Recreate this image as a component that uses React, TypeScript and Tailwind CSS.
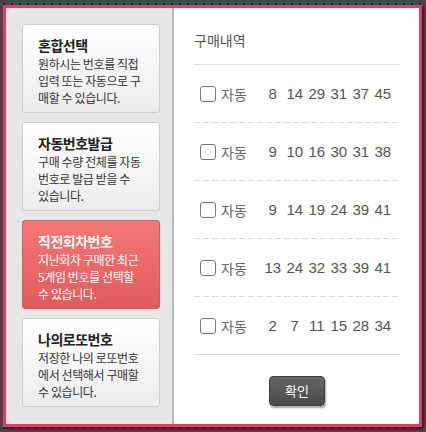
import React from 'react';

const cards = [
  { title: '혼합선택', lines: ['원하시는 번호를 직접', '입력 또는 자동으로 구', '매할 수 있습니다.'], active: false },
  { title: '자동번호발급', lines: ['구매 수량 전체를 자동', '번호로 발급 받을 수', '있습니다.'], active: false },
  { title: '직전회차번호', lines: ['지난회차 구매한 최근', '5게임 번호를 선택할', '수 있습니다.'], active: true },
  { title: '나의로또번호', lines: ['저장한 나의 로또번호', '에서 선택해서 구매할', '수 있습니다.'], active: false },
];

const rows = [
  [8, 14, 29, 31, 37, 45],
  [9, 10, 16, 30, 31, 38],
  [9, 14, 19, 24, 39, 41],
  [13, 24, 32, 33, 39, 41],
  [2, 7, 11, 15, 28, 34],
];

const kr = { fontFamily: '"Noto Sans CJK KR", "Noto Sans", sans-serif' };

export default function App() {
  return (
    <div
      className="w-[426px] h-[432px] pt-[5px] pl-[3px] bg-[#474747] bg-[radial-gradient(#262626_1px,transparent_1.2px)] bg-[length:8px_8px]"
      style={kr}
    >
      <div className="w-[419px] h-[422px] border-[3px] border-[#f5336f] flex shadow-[2px_2px_2px_rgba(0,0,0,0.5)]">
        {/* left menu */}
        <div className="w-[168px] h-full bg-[#e6e6e6] border-r-2 border-[#b9b9b9] pt-4 pl-4 flex flex-col gap-[9px]">
          {cards.map((c) => (
            <div
              key={c.title}
              className={
                c.active
                  ? 'w-[138px] h-[89px] rounded-[3px] border border-[#d65a5a] bg-gradient-to-b from-[#f67676] to-[#df5c5c] pl-[15px] pt-[11px] text-white'
                  : 'w-[138px] h-[89px] rounded-[3px] border border-[#cdcdcd] bg-gradient-to-b from-white to-[#ececec] pl-[15px] pt-[11px] text-[#222]'
              }
            >
              <div className="text-[14px] font-bold leading-[19px] tracking-[-0.5px]">{c.title}</div>
              <div className={c.active ? 'text-[12px] leading-[17px] tracking-[-0.4px] whitespace-nowrap text-white' : 'text-[12px] leading-[17px] tracking-[-0.4px] whitespace-nowrap text-[#333]'}>
                {c.lines.map((l) => (
                  <div key={l}>{l}</div>
                ))}
              </div>
            </div>
          ))}
        </div>

        {/* right content */}
        <div className="flex-1 h-full bg-white pl-5 pr-[19px] pt-[22px]">
          <div className="text-[14px] leading-5 text-[#555] pb-[14px] border-b border-[#dcdcdc]">구매내역</div>
          <div className="border-b border-[#dcdcdc]">
            {rows.map((r, i) => (
              <div key={i}>
                <div className="h-[57px] flex items-center pl-[6px]">
                  <span className="w-4 h-4 rounded-[3px] border-[1.5px] border-[#777] bg-white" />
                  <span className="ml-[5px] text-[14px] text-[#666] leading-5">자동</span>
                  <div className="ml-[15px] flex" style={{ fontFamily: '"Liberation Sans", Arial, sans-serif' }}>
                    {r.map((n, j) => (
                      <span key={j} className="w-[22px] text-center text-[15px] text-[#555] leading-5">
                        {n}
                      </span>
                    ))}
                  </div>
                </div>
                {i < rows.length - 1 && (
                  <div className="h-px bg-[repeating-linear-gradient(90deg,#dcdcdc_0_6px,transparent_6px_9px)]" />
                )}
              </div>
            ))}
          </div>
          <div className="flex justify-center pt-[21px]">
            <button className="w-[56px] h-[30px] rounded-[4px] border border-[#3e3e3e] bg-gradient-to-b from-[#666] to-[#4a4a4a] text-white text-[13px] shadow-[1px_2px_2px_rgba(0,0,0,0.35)]">
              확인
            </button>
          </div>
        </div>
      </div>
    </div>
  );
}
